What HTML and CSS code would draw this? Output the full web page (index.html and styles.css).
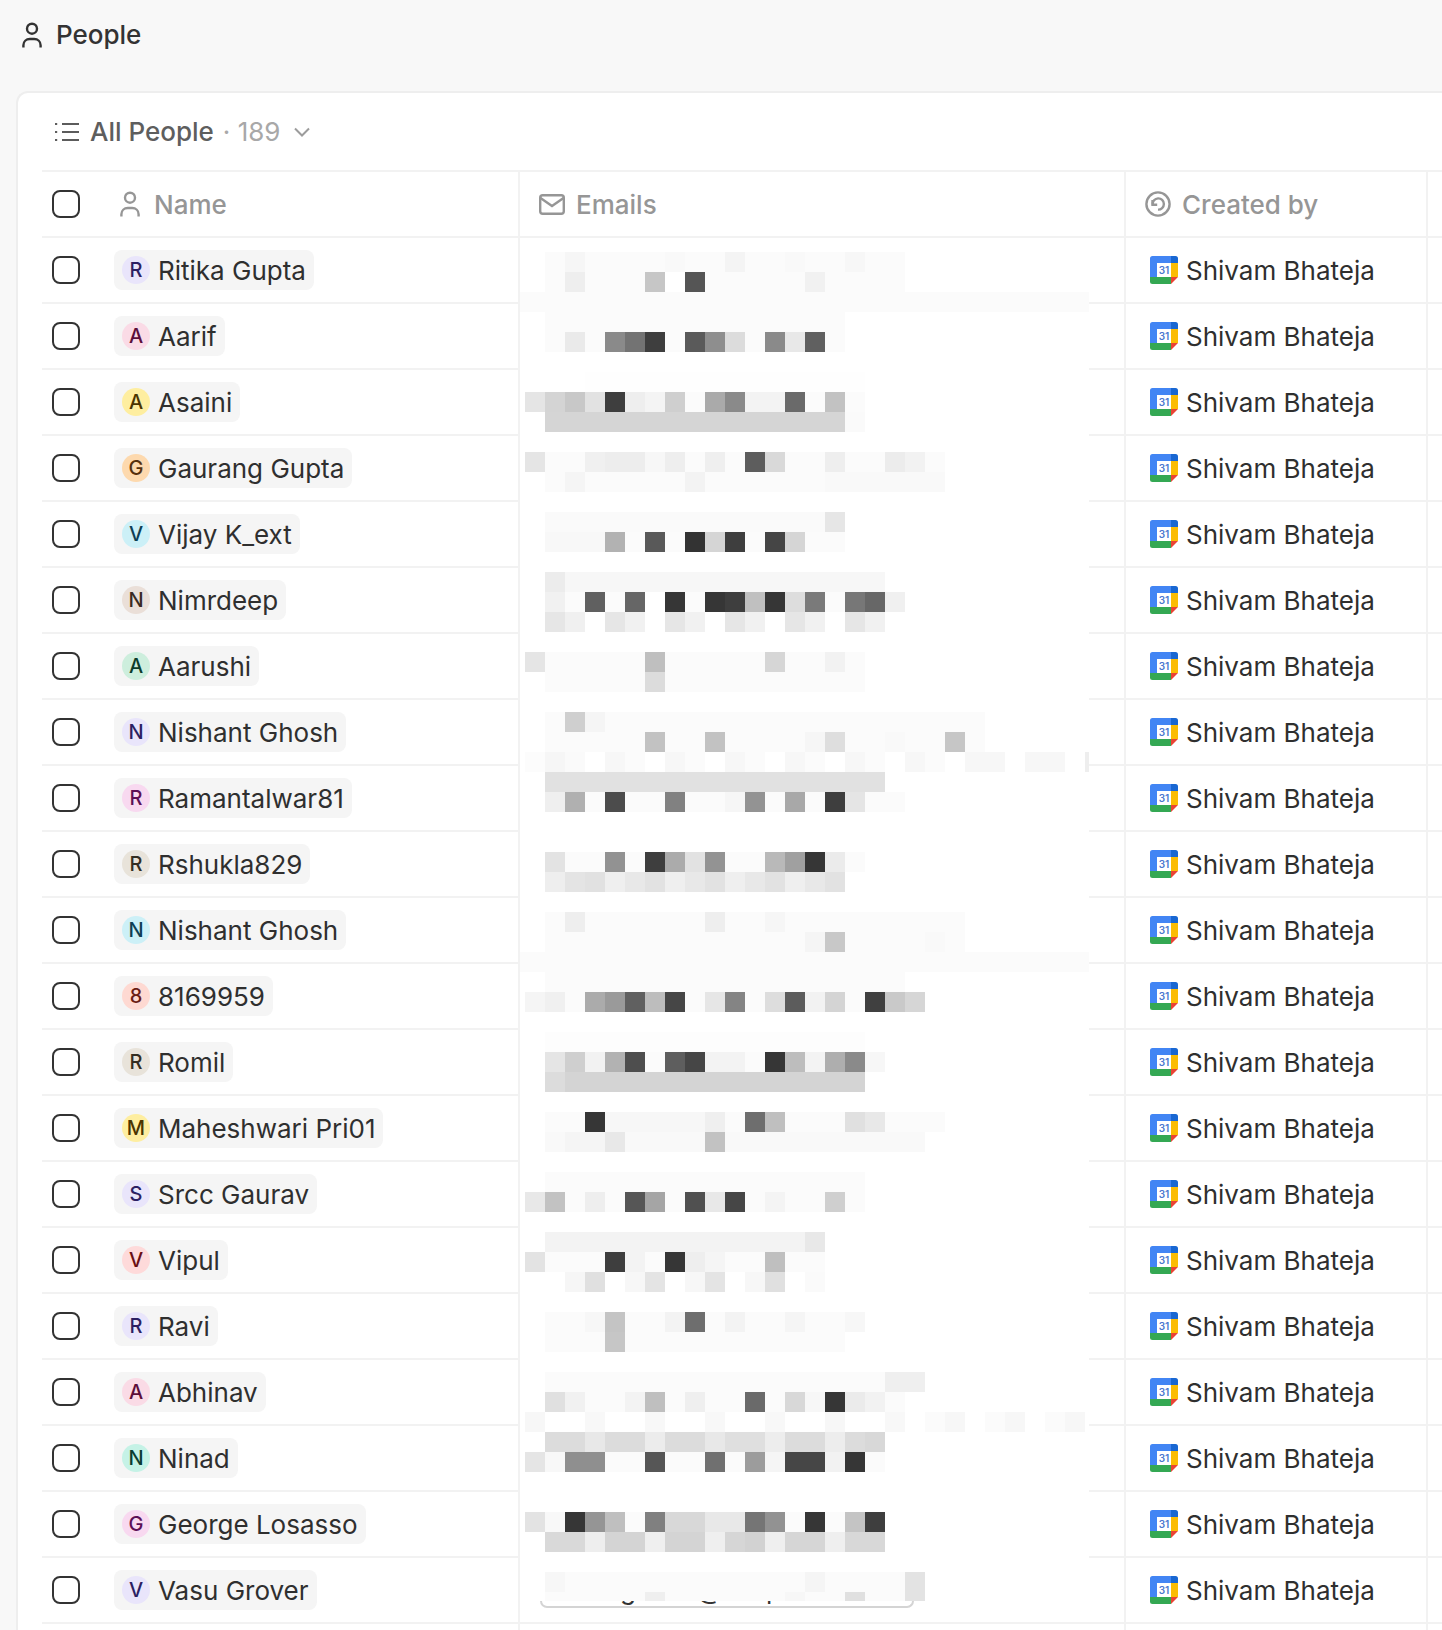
FILE: index.html
```html
<!DOCTYPE html>
<html lang="en">
<head>
<meta charset="utf-8">
<title>People</title>
<link rel="stylesheet" href="styles.css">
</head>
<body>
<svg class="defs" width="0" height="0" aria-hidden="true">
  <symbol id="person" viewBox="0 0 20 26">
    <circle cx="10" cy="6.7" r="5" fill="none" stroke="currentColor" stroke-width="2.4"/>
    <path d="M1.4 25.6v-2.4c0-3.6 2.8-6.2 6.4-6.2h4.4c3.6 0 6.4 2.600 6.4 6.200v2.400" fill="none" stroke="currentColor" stroke-width="2.4"/>
  </symbol>
  <symbol id="cal" viewBox="0 0 28 28">
    <path d="M2.5 0H21v7H7v14H0V2.500A2.500 2.500 0 0 1 2.500 0z" fill="#4285f4"/>
    <path d="M21 0h4.500A2.500 2.500 0 0 1 28 2.500V7h-7z" fill="#1967d2"/>
    <path d="M21 7h7v14h-7z" fill="#fbbc04"/>
    <path d="M7 21h14v7H2.500A2.500 2.500 0 0 1 0 25.500V21z" fill="#34a853"/>
    <path d="M21 21h7l-7 7z" fill="#ea4335"/>
    <path d="M7 7h14v14H7z" fill="#fff"/>
  </symbol>
</svg>

<header class="page-head">
  <svg class="icon-person head-icon"><use href="#person"/></svg>
  <h1 class="page-title">People</h1>
</header>

<main class="card">
  <div class="toolbar">
    <svg class="list-icon" viewBox="0 0 24 20" fill="none" stroke="currentColor" stroke-width="2.200">
      <path d="M7 2h17M7 10h17M7 18h17"/>
      <path d="M0 2h2.200M0 10h2.200M0 18h2.200"/>
    </svg>
    <span class="view-name">All People</span>
    <span class="view-count">· 189</span>
    <svg class="chevron" viewBox="0 0 16 10" fill="none" stroke="currentColor" stroke-width="2"><path d="M1 1.500l7 7 7-7"/></svg>
  </div>

  <div class="table">
    <div class="row head">
      <div class="cell name"><span class="check"></span><span class="head-label name-label"><svg class="icon-person"><use href="#person"/></svg>Name</span></div>
      <div class="cell email-head"><span class="head-label"><svg class="mail-icon" viewBox="0 0 26 21" fill="none" stroke="currentColor" stroke-width="2.400"><rect x="1.200" y="1.200" width="23.600" height="18.600" rx="2.500"/><path d="M1.500 4l11.500 8 11.500-8"/></svg>Emails</span></div>
      <div class="cell creator-head"><span class="head-label"><svg class="hist-icon" viewBox="0 0 26 26" fill="none" stroke="currentColor" stroke-width="2.400"><circle cx="13" cy="13" r="11.600"/><path d="M7.700 13.500a5.600 5.600 0 1 1 5.300 5.100"/><path d="M7.500 9v4.700h4.700"/></svg>Created by</span></div>
      <div class="cell last"></div>
    </div>

    <div class="row"><div class="cell name"><span class="check"></span><span class="chip"><span class="avatar violet">R</span>Ritika Gupta</span></div><div class="cell"></div><div class="cell creator"><span class="cal"><svg class="cal-art"><use href="#cal"/></svg><span class="cal-num">31</span></span>Shivam Bhateja</div><div class="cell last"></div></div>
    <div class="row"><div class="cell name"><span class="check"></span><span class="chip"><span class="avatar pink">A</span>Aarif</span></div><div class="cell"></div><div class="cell creator"><span class="cal"><svg class="cal-art"><use href="#cal"/></svg><span class="cal-num">31</span></span>Shivam Bhateja</div><div class="cell last"></div></div>
    <div class="row"><div class="cell name"><span class="check"></span><span class="chip"><span class="avatar yellow">A</span>Asaini</span></div><div class="cell"></div><div class="cell creator"><span class="cal"><svg class="cal-art"><use href="#cal"/></svg><span class="cal-num">31</span></span>Shivam Bhateja</div><div class="cell last"></div></div>
    <div class="row"><div class="cell name"><span class="check"></span><span class="chip"><span class="avatar orange">G</span>Gaurang Gupta</span></div><div class="cell"></div><div class="cell creator"><span class="cal"><svg class="cal-art"><use href="#cal"/></svg><span class="cal-num">31</span></span>Shivam Bhateja</div><div class="cell last"></div></div>
    <div class="row"><div class="cell name"><span class="check"></span><span class="chip"><span class="avatar cyan">V</span>Vijay K_ext</span></div><div class="cell"></div><div class="cell creator"><span class="cal"><svg class="cal-art"><use href="#cal"/></svg><span class="cal-num">31</span></span>Shivam Bhateja</div><div class="cell last"></div></div>
    <div class="row"><div class="cell name"><span class="check"></span><span class="chip"><span class="avatar brown">N</span>Nimrdeep</span></div><div class="cell"></div><div class="cell creator"><span class="cal"><svg class="cal-art"><use href="#cal"/></svg><span class="cal-num">31</span></span>Shivam Bhateja</div><div class="cell last"></div></div>
    <div class="row"><div class="cell name"><span class="check"></span><span class="chip"><span class="avatar mint">A</span>Aarushi</span></div><div class="cell"></div><div class="cell creator"><span class="cal"><svg class="cal-art"><use href="#cal"/></svg><span class="cal-num">31</span></span>Shivam Bhateja</div><div class="cell last"></div></div>
    <div class="row"><div class="cell name"><span class="check"></span><span class="chip"><span class="avatar violet">N</span>Nishant Ghosh</span></div><div class="cell"></div><div class="cell creator"><span class="cal"><svg class="cal-art"><use href="#cal"/></svg><span class="cal-num">31</span></span>Shivam Bhateja</div><div class="cell last"></div></div>
    <div class="row"><div class="cell name"><span class="check"></span><span class="chip"><span class="avatar magenta">R</span>Ramantalwar81</span></div><div class="cell"></div><div class="cell creator"><span class="cal"><svg class="cal-art"><use href="#cal"/></svg><span class="cal-num">31</span></span>Shivam Bhateja</div><div class="cell last"></div></div>
    <div class="row"><div class="cell name"><span class="check"></span><span class="chip"><span class="avatar sand">R</span>Rshukla829</span></div><div class="cell"></div><div class="cell creator"><span class="cal"><svg class="cal-art"><use href="#cal"/></svg><span class="cal-num">31</span></span>Shivam Bhateja</div><div class="cell last"></div></div>
    <div class="row"><div class="cell name"><span class="check"></span><span class="chip"><span class="avatar cyan">N</span>Nishant Ghosh</span></div><div class="cell"></div><div class="cell creator"><span class="cal"><svg class="cal-art"><use href="#cal"/></svg><span class="cal-num">31</span></span>Shivam Bhateja</div><div class="cell last"></div></div>
    <div class="row"><div class="cell name"><span class="check"></span><span class="chip"><span class="avatar red">8</span>8169959</span></div><div class="cell"></div><div class="cell creator"><span class="cal"><svg class="cal-art"><use href="#cal"/></svg><span class="cal-num">31</span></span>Shivam Bhateja</div><div class="cell last"></div></div>
    <div class="row"><div class="cell name"><span class="check"></span><span class="chip"><span class="avatar sand">R</span>Romil</span></div><div class="cell"></div><div class="cell creator"><span class="cal"><svg class="cal-art"><use href="#cal"/></svg><span class="cal-num">31</span></span>Shivam Bhateja</div><div class="cell last"></div></div>
    <div class="row"><div class="cell name"><span class="check"></span><span class="chip"><span class="avatar yellow">M</span>Maheshwari Pri01</span></div><div class="cell"></div><div class="cell creator"><span class="cal"><svg class="cal-art"><use href="#cal"/></svg><span class="cal-num">31</span></span>Shivam Bhateja</div><div class="cell last"></div></div>
    <div class="row"><div class="cell name"><span class="check"></span><span class="chip"><span class="avatar violet">S</span>Srcc Gaurav</span></div><div class="cell"></div><div class="cell creator"><span class="cal"><svg class="cal-art"><use href="#cal"/></svg><span class="cal-num">31</span></span>Shivam Bhateja</div><div class="cell last"></div></div>
    <div class="row"><div class="cell name"><span class="check"></span><span class="chip"><span class="avatar rose">V</span>Vipul</span></div><div class="cell"></div><div class="cell creator"><span class="cal"><svg class="cal-art"><use href="#cal"/></svg><span class="cal-num">31</span></span>Shivam Bhateja</div><div class="cell last"></div></div>
    <div class="row"><div class="cell name"><span class="check"></span><span class="chip"><span class="avatar violet">R</span>Ravi</span></div><div class="cell"></div><div class="cell creator"><span class="cal"><svg class="cal-art"><use href="#cal"/></svg><span class="cal-num">31</span></span>Shivam Bhateja</div><div class="cell last"></div></div>
    <div class="row"><div class="cell name"><span class="check"></span><span class="chip"><span class="avatar pink">A</span>Abhinav</span></div><div class="cell"></div><div class="cell creator"><span class="cal"><svg class="cal-art"><use href="#cal"/></svg><span class="cal-num">31</span></span>Shivam Bhateja</div><div class="cell last"></div></div>
    <div class="row"><div class="cell name"><span class="check"></span><span class="chip"><span class="avatar aqua">N</span>Ninad</span></div><div class="cell"></div><div class="cell creator"><span class="cal"><svg class="cal-art"><use href="#cal"/></svg><span class="cal-num">31</span></span>Shivam Bhateja</div><div class="cell last"></div></div>
    <div class="row"><div class="cell name"><span class="check"></span><span class="chip"><span class="avatar magenta">G</span>George Losasso</span></div><div class="cell"></div><div class="cell creator"><span class="cal"><svg class="cal-art"><use href="#cal"/></svg><span class="cal-num">31</span></span>Shivam Bhateja</div><div class="cell last"></div></div>
    <div class="row"><div class="cell name"><span class="check"></span><span class="chip"><span class="avatar violet">V</span>Vasu Grover</span></div><div class="cell"></div><div class="cell creator"><span class="cal"><svg class="cal-art"><use href="#cal"/></svg><span class="cal-num">31</span></span>Shivam Bhateja</div><div class="cell last"></div></div>
    <div class="row tail"><div class="cell name"></div><div class="cell"></div><div class="cell"></div><div class="cell last"></div></div>

    <div class="redaction">
      <svg class="mosaic" width="569" height="1384" viewBox="0 0 569 1384" shape-rendering="crispEdges">
        <g transform="translate(5 14) scale(20)">
          <g transform="translate(0 0)"><rect x="1" width="18"/><rect x="2" width="1" fill="#f6f6f6"/><rect x="10" width="1" fill="#f4f4f4"/><rect x="7" width="1" fill="#f9f9f9"/><rect x="13" width="1" fill="#f9f9f9"/><rect x="16" width="1" fill="#f7f7f7"/></g>
          <g transform="translate(0 1)"><rect x="1" width="18"/><rect x="2" width="1" fill="#eee"/><rect x="6" width="1" fill="#c6c6c6"/><rect x="7" width="1" fill="#fff"/><rect x="8" width="1" fill="#555"/><rect x="14" width="1" fill="#f1f1f1"/></g>
          <g transform="translate(0 2)"><rect x="-.25" width="28.500"/></g>
          <g transform="translate(0 3)"><rect x="1" width="15"/></g>
          <g transform="translate(0 4)"><rect x="1" width="15"/><rect x="2" width="1" fill="#eaeaea"/><rect x="4" width="1" fill="#8a8a8a"/><rect x="5" width="1" fill="#737373"/><rect x="6" width="1" fill="#3e3e3e"/><rect x="8" width="1" fill="#5a5a5a"/><rect x="9" width="1" fill="#8e8e8e"/><rect x="10" width="1" fill="#dcdcdc"/><rect x="12" width="1" fill="#8a8a8a"/><rect x="13" width="1" fill="#e8e8e8"/><rect x="14" width="1" fill="#606060"/></g>
          <g transform="translate(0 6)"><rect x="3" width="14" fill="#fefefe"/></g>
          <g transform="translate(0 7)"><rect x="0" width="17"/><rect x="0" width="1" fill="#e5e5e5"/><rect x="1" width="1" fill="#d4d4d4"/><rect x="2" width="1" fill="#c8c8c8"/><rect x="3" width="1" fill="#e2e2e2"/><rect x="4" width="1" fill="#3e3e3e"/><rect x="5" width="1" fill="#eee"/><rect x="6" width="1" fill="#f4f4f4"/><rect x="7" width="1" fill="#cfcfcf"/><rect x="9" width="1" fill="#aaa"/><rect x="10" width="1" fill="#8a8a8a"/><rect x="11" width="2" fill="#f3f3f3"/><rect x="13" width="1" fill="#6a6a6a"/><rect x="15" width="1" fill="#c2c2c2"/></g>
          <g transform="translate(0 8)"><rect x="1" width="15" fill="#d5d5d5"/><rect x="16" width="1" fill="#fafafa"/></g>
          <g transform="translate(0 10)"><rect x="0" width="21"/><rect x="0" width="1" fill="#e5e5e5"/><rect x="3" width="1" fill="#f0f0f0"/><rect x="4" width="2" fill="#ededed"/><rect x="6" width="1" fill="#f7f7f7"/><rect x="7" width="1" fill="#eee"/><rect x="9" width="1" fill="#efefef"/><rect x="11" width="1" fill="#5d5d5d"/><rect x="12" width="1" fill="#d9d9d9"/><rect x="15" width="1" fill="#eee"/><rect x="18" width="1" fill="#ececec"/><rect x="19" width="1" fill="#f2f2f2"/></g>
          <g transform="translate(0 11)"><rect x="1" width="20"/><rect x="2" width="1" fill="#f5f5f5"/><rect x="8" width="1" fill="#f3f3f3"/><rect x="15" width="6" fill="#f9f9f9"/></g>
          <g transform="translate(0 13)"><rect x="1" width="14" fill="#fafafa"/><rect x="15" width="1" fill="#e6e6e6"/></g>
          <g transform="translate(0 14)"><rect x="1" width="15"/><rect x="1" width="3" fill="#f8f8f8"/><rect x="4" width="1" fill="#b2b2b2"/><rect x="6" width="1" fill="#595959"/><rect x="8" width="1" fill="#333"/><rect x="9" width="1" fill="#d5d5d5"/><rect x="10" width="1" fill="#3e3e3e"/><rect x="12" width="1" fill="#454545"/><rect x="13" width="1" fill="#d5d5d5"/></g>
          <g transform="translate(0 16)"><rect x="1" width="1" fill="#ececec"/><rect x="2" width="16" fill="#f7f7f7"/></g>
          <g transform="translate(0 17)"><rect x="1" width="18"/><rect x="1" width="1" fill="#f1f1f1"/><rect x="3" width="1" fill="#606060"/><rect x="5" width="1" fill="#666"/><rect x="6" width="1" fill="#fff"/><rect x="7" width="1" fill="#363636"/><rect x="9" width="1" fill="#363636"/><rect x="10" width="1" fill="#3e3e3e"/><rect x="11" width="1" fill="#c0c0c0"/><rect x="12" width="1" fill="#363636"/><rect x="13" width="1" fill="#ddd"/><rect x="14" width="1" fill="#7a7a7a"/><rect x="16" width="1" fill="#777"/><rect x="17" width="1" fill="#676767"/><rect x="18" width="1" fill="#f0f0f0"/></g>
          <g transform="translate(0 18)"><rect x="1" width="1" fill="#e6e6e6"/><rect x="2" width="1" fill="#f0f0f0"/><rect x="4" width="1" fill="#e6e6e6"/><rect x="5" width="1" fill="#f1f1f1"/><rect x="7" width="1" fill="#e6e6e6"/><rect x="8" width="1" fill="#f1f1f1"/><rect x="10" width="1" fill="#e6e6e6"/><rect x="11" width="1" fill="#f1f1f1"/><rect x="13" width="1" fill="#e6e6e6"/><rect x="14" width="1" fill="#f1f1f1"/><rect x="16" width="1" fill="#e6e6e6"/><rect x="17" width="1" fill="#f1f1f1"/></g>
          <g transform="translate(0 20)"><rect x="0" width="17"/><rect x="0" width="1" fill="#e5e5e5"/><rect x="6" width="1" fill="#bfbfbf"/><rect x="12" width="1" fill="#d6d6d6"/><rect x="15" width="1" fill="#f2f2f2"/></g>
          <g transform="translate(0 21)"><rect x="1" width="16"/><rect x="6" width="1" fill="#dcdcdc"/></g>
          <g transform="translate(0 23)"><rect x="1" width="22"/><rect x="2" width="1" fill="#cfcfcf"/><rect x="3" width="1" fill="#f5f5f5"/></g>
          <g transform="translate(0 24)"><rect x="1" width="22"/><rect x="6" width="1" fill="#c2c2c2"/><rect x="9" width="1" fill="#c2c2c2"/><rect x="14" width="1" fill="#f6f6f6"/><rect x="15" width="1" fill="#dedede"/><rect x="18" width="1" fill="#f9f9f9"/><rect x="21" width="1" fill="#c6c6c6"/></g>
          <g transform="translate(0 25)"><rect x="0" width="1" fill="#fcfcfc"/><rect x="1" width="1" fill="#f6f6f6"/><rect x="2" width="1" fill="#fafafa"/><rect x="4" width="1" fill="#f7f7f7"/><rect x="5" width="1"/><rect x="7" width="1" fill="#f7f7f7"/><rect x="8" width="1"/><rect x="10" width="1" fill="#f7f7f7"/><rect x="11" width="1"/><rect x="13" width="1" fill="#f7f7f7"/><rect x="14" width="1"/><rect x="16" width="1" fill="#f7f7f7"/><rect x="17" width="1"/><rect x="19" width="1" fill="#f7f7f7"/><rect x="20" width="1"/><rect x="22" width="2" fill="#f7f7f7"/><rect x="25" width="2" fill="#f7f7f7"/><rect x="28" width=".2" fill="#eee"/></g>
          <g transform="translate(0 26)"><rect x="1" width="17" fill="#e1e1e1"/></g>
          <g transform="translate(0 27)"><rect x="1" width="18"/><rect x="1" width="1" fill="#efefef"/><rect x="2" width="1" fill="#b0b0b0"/><rect x="4" width="1" fill="#4c4c4c"/><rect x="7" width="1" fill="#818181"/><rect x="10" width="1" fill="#f6f6f6"/><rect x="11" width="1" fill="#939393"/><rect x="13" width="1" fill="#a8a8a8"/><rect x="15" width="1" fill="#3e3e3e"/><rect x="16" width="1" fill="#e5e5e5"/></g>
          <g transform="translate(0 30)"><rect x="1" width="16"/><rect x="1" width="1" fill="#e3e3e3"/><rect x="4" width="1" fill="#929292"/><rect x="6" width="1" fill="#3e3e3e"/><rect x="7" width="1" fill="#ababab"/><rect x="8" width="1" fill="#e2e2e2"/><rect x="9" width="1" fill="#939393"/><rect x="12" width="1" fill="#b9b9b9"/><rect x="13" width="1" fill="#a0a0a0"/><rect x="14" width="1" fill="#363636"/><rect x="15" width="1" fill="#ebebeb"/></g>
          <g transform="translate(0 31)"><rect x="1" width="1" fill="#eee"/><rect x="2" width="1" fill="#e4e4e4"/><rect x="3" width="1" fill="#e1e1e1"/><rect x="4" width="1" fill="#efefef"/><rect x="5" width="1" fill="#e8e8e8"/><rect x="6" width="1" fill="#e2e2e2"/><rect x="7" width="1" fill="#efefef"/><rect x="8" width="1" fill="#e8e8e8"/><rect x="9" width="1" fill="#e2e2e2"/><rect x="10" width="1" fill="#efefef"/><rect x="11" width="1" fill="#e8e8e8"/><rect x="12" width="1" fill="#e2e2e2"/><rect x="13" width="1" fill="#efefef"/><rect x="14" width="1" fill="#e8e8e8"/><rect x="15" width="1" fill="#e2e2e2"/></g>
          <g transform="translate(0 33)"><rect x="1" width="21"/><rect x="2" width="1" fill="#eee"/><rect x="9" width="1" fill="#eee"/><rect x="12" width="1" fill="#f6f6f6"/></g>
          <g transform="translate(0 34)"><rect x="1" width="21"/><rect x="14" width="1" fill="#f5f5f5"/><rect x="15" width="1" fill="#c8c8c8"/><rect x="20" width="1" fill="#f9f9f9"/></g>
          <g transform="translate(0 35)"><rect x="-.25" width="28.500"/></g>
          <g transform="translate(0 36)"><rect x="1" width="18"/></g>
          <g transform="translate(0 37)"><rect x="0" width="20"/><rect x="0" width="1" fill="#f5f5f5"/><rect x="1" width="1" fill="#f0f0f0"/><rect x="3" width="1" fill="#ababab"/><rect x="4" width="1" fill="#9a9a9a"/><rect x="5" width="1" fill="#606060"/><rect x="6" width="1" fill="#bdbdbd"/><rect x="7" width="1" fill="#464646"/><rect x="9" width="1" fill="#e6e6e6"/><rect x="10" width="1" fill="#848484"/><rect x="12" width="1" fill="#ddd"/><rect x="13" width="1" fill="#5c5c5c"/><rect x="14" width="1" fill="#f2f2f2"/><rect x="15" width="1" fill="#d4d4d4"/><rect x="17" width="1" fill="#404040"/><rect x="18" width="1" fill="#c9c9c9"/><rect x="19" width="1" fill="#d6d6d6"/></g>
          <g transform="translate(0 39)"><rect x="1" width="16" fill="#fdfdfd"/></g>
          <g transform="translate(0 40)"><rect x="1" width="17"/><rect x="1" width="1" fill="#e5e5e5"/><rect x="2" width="1" fill="#cfcfcf"/><rect x="3" width="1" fill="#f2f2f2"/><rect x="4" width="1" fill="#b2b2b2"/><rect x="5" width="1" fill="#4e4e4e"/><rect x="7" width="1" fill="#5e5e5e"/><rect x="8" width="1" fill="#464646"/><rect x="9" width="2" fill="#f3f3f3"/><rect x="12" width="1" fill="#363636"/><rect x="13" width="1" fill="#bdbdbd"/><rect x="14" width="1" fill="#f3f3f3"/><rect x="15" width="1" fill="#aeaeae"/><rect x="16" width="1" fill="#8a8a8a"/><rect x="17" width="1" fill="#f7f7f7"/></g>
          <g transform="translate(0 41)"><rect x="1" width="1" fill="#dcdcdc"/><rect x="2" width="15" fill="#d4d4d4"/></g>
          <g transform="translate(0 43)"><rect x="1" width="20"/><rect x="3" width="1" fill="#363636"/><rect x="4" width="5" fill="#f7f7f7"/><rect x="9" width="1" fill="#efefef"/><rect x="11" width="1" fill="#6e6e6e"/><rect x="12" width="1" fill="#bfbfbf"/><rect x="16" width="1" fill="#e0e0e0"/><rect x="17" width="1" fill="#e8e8e8"/></g>
          <g transform="translate(0 44)"><rect x="1" width="19" fill="#f9f9f9"/><rect x="2" width="2" fill="#f5f5f5"/><rect x="4" width="1" fill="#e8e8e8"/><rect x="9" width="1" fill="#c2c2c2"/></g>
          <g transform="translate(0 46)"><rect x="1" width="16"/></g>
          <g transform="translate(0 47)"><rect x="0" width="17"/><rect x="0" width="1" fill="#e8e8e8"/><rect x="1" width="1" fill="#c2c2c2"/><rect x="3" width="1" fill="#eee"/><rect x="5" width="1" fill="#565656"/><rect x="6" width="1" fill="#a5a5a5"/><rect x="8" width="1" fill="#505050"/><rect x="9" width="1" fill="#e8e8e8"/><rect x="10" width="1" fill="#464646"/><rect x="12" width="1" fill="#f4f4f4"/><rect x="15" width="1" fill="#cfcfcf"/></g>
          <g transform="translate(0 49)"><rect x="1" width="13" fill="#f3f3f3"/><rect x="14" width="1" fill="#e8e8e8"/></g>
          <g transform="translate(0 50)"><rect x="0" width="15"/><rect x="0" width="1" fill="#e3e3e3"/><rect x="4" width="1" fill="#3e3e3e"/><rect x="5" width="1" fill="#f3f3f3"/><rect x="7" width="1" fill="#363636"/><rect x="8" width="1" fill="#eee"/><rect x="9" width="1" fill="#f5f5f5"/><rect x="12" width="1" fill="#bfbfbf"/></g>
          <g transform="translate(0 51)"><rect x="2" width="1" fill="#f6f6f6"/><rect x="3" width="1" fill="#e0e0e0"/><rect x="5" width="1" fill="#f7f7f7"/><rect x="6" width="1" fill="#e4e4e4"/><rect x="8" width="1" fill="#f7f7f7"/><rect x="9" width="1" fill="#e4e4e4"/><rect x="11" width="1" fill="#f7f7f7"/><rect x="12" width="1" fill="#e0e0e0"/><rect x="14" width="1" fill="#fafafa"/></g>
          <g transform="translate(0 53)"><rect x="1" width="16"/><rect x="3" width="1" fill="#f7f7f7"/><rect x="4" width="1" fill="#c4c4c4"/><rect x="7" width="1" fill="#f3f3f3"/><rect x="8" width="1" fill="#6e6e6e"/><rect x="10" width="1" fill="#f3f3f3"/><rect x="13" width="1" fill="#f5f5f5"/><rect x="16" width="1" fill="#f7f7f7"/></g>
          <g transform="translate(0 54)"><rect x="1" width="15"/><rect x="4" width="1" fill="#c6c6c6"/></g>
          <g transform="translate(0 56)"><rect x="1" width="17"/><rect x="18" width="2" fill="#efefef"/></g>
          <g transform="translate(0 57)"><rect x="1" width="18"/><rect x="1" width="1" fill="#e0e0e0"/><rect x="2" width="1" fill="#f1f1f1"/><rect x="5" width="1" fill="#f3f3f3"/><rect x="6" width="1" fill="#bfbfbf"/><rect x="8" width="1" fill="#efefef"/><rect x="11" width="1" fill="#6a6a6a"/><rect x="13" width="1" fill="#d8d8d8"/><rect x="14" width="1" fill="#f7f7f7"/><rect x="15" width="1" fill="#363636"/><rect x="16" width="1" fill="#ebebeb"/><rect x="17" width="1" fill="#f2f2f2"/></g>
          <g transform="translate(0 58)"><rect x="0" width="1" fill="#f7f7f7"/><rect x="3" width="1" fill="#f8f8f8"/><rect x="6" width="1" fill="#f8f8f8"/><rect x="9" width="1" fill="#f8f8f8"/><rect x="12" width="1" fill="#f8f8f8"/><rect x="15" width="1" fill="#f7f7f7"/><rect x="18" width="1" fill="#f8f8f8"/><rect x="21" width="1" fill="#f7f7f7"/><rect x="24" width="1" fill="#f7f7f7"/><rect x="27" width="1" fill="#f7f7f7"/><rect x="20" width="1"/><rect x="23" width="1"/><rect x="26" width="1"/></g>
          <g transform="translate(0 59)"><rect x="1" width="2" fill="#dcdcdc"/><rect x="3" width="1" fill="#e8e8e8"/><rect x="4" width="2" fill="#dcdcdc"/><rect x="6" width="1" fill="#ececec"/><rect x="7" width="2" fill="#dcdcdc"/><rect x="9" width="1" fill="#e8e8e8"/><rect x="10" width="2" fill="#dfdfdf"/><rect x="12" width="1" fill="#ededed"/><rect x="13" width="2" fill="#dcdcdc"/><rect x="15" width="1" fill="#ededed"/><rect x="16" width="1" fill="#dcdcdc"/><rect x="17" width="1" fill="#d8d8d8"/></g>
          <g transform="translate(0 60)"><rect x="0" width="18"/><rect x="0" width="1" fill="#e5e5e5"/><rect x="1" width="1" fill="#f8f8f8"/><rect x="2" width="2" fill="#8f8f8f"/><rect x="6" width="1" fill="#565656"/><rect x="9" width="1" fill="#707070"/><rect x="11" width="1" fill="#9c9c9c"/><rect x="12" width="1" fill="#f5f5f5"/><rect x="13" width="2" fill="#464646"/><rect x="15" width="1" fill="#f2f2f2"/><rect x="16" width="1" fill="#363636"/></g>
          <g transform="translate(0 63)"><rect x="0" width="18"/><rect x="0" width="1" fill="#e3e3e3"/><rect x="1" width="1" fill="#f8f8f8"/><rect x="2" width="1" fill="#363636"/><rect x="3" width="1" fill="#959595"/><rect x="4" width="1" fill="#bfbfbf"/><rect x="6" width="1" fill="#808080"/><rect x="7" width="2" fill="#d8d8d8"/><rect x="9" width="2" fill="#e8e8e8"/><rect x="11" width="1" fill="#757575"/><rect x="12" width="1" fill="#929292"/><rect x="14" width="1" fill="#363636"/><rect x="16" width="1" fill="#c4c4c4"/><rect x="17" width="1" fill="#3e3e3e"/></g>
          <g transform="translate(0 64)"><rect x="1" width="2" fill="#d9d9d9"/><rect x="3" width="1" fill="#eee"/><rect x="4" width="2" fill="#d4d4d4"/><rect x="6" width="1" fill="#efefef"/><rect x="7" width="2" fill="#d4d4d4"/><rect x="9" width="1" fill="#efefef"/><rect x="10" width="1" fill="#d6d6d6"/><rect x="11" width="1" fill="#d2d2d2"/><rect x="12" width="1" fill="#efefef"/><rect x="13" width="2" fill="#d6d6d6"/><rect x="15" width="1" fill="#efefef"/><rect x="16" width="2" fill="#d8d8d8"/></g>
          <g transform="translate(0 66)"><rect x="1" width="19"/><rect x="1" width="1" fill="#f7f7f7"/><rect x="14" width="1" fill="#f5f5f5"/><rect x="19" width="1" fill="#e3e3e3"/></g>
          <g transform="translate(0 67)" class="cut"><rect x="1" width="19"/><rect x="6" width="1" fill="#efefef"/><rect x="13" width="1" fill="#f7f7f7"/><rect x="16" width="1" fill="#e0e0e0"/><rect x="19" width="1" fill="#e3e3e3"/></g>
        </g>
      </svg>
      <div class="peek">
        <span class="peek-g">g</span><span class="peek-at">@</span><span class="peek-p">p</span>
      </div>
    </div>
  </div>
</main>
</body>
</html>
```

FILE: styles.css
```css
* { box-sizing: border-box; }

html, body {
  margin: 0;
  height: 1630px;
  overflow: hidden;
}

body {
  background: #f8f8f8;
  color: #2f2f2f;
  font-family: Inter, "Liberation Sans", sans-serif;
  font-size: 26px;
}

.defs { position: absolute; }

.page-head {
  display: flex;
  align-items: center;
  height: 91px;
  padding: 0 0 22px 22px;
}

.icon-person {
  width: 20px;
  height: 26px;
}

.head-icon { color: #333; }

.page-title {
  margin: 0 0 0 14px;
  font-size: 26px;
  font-weight: 500;
  color: #333;
}

.card {
  margin-left: 16px;
  height: 1539px;
  background: #fff;
  border: 2px solid #eeeeee;
  border-width: 2px 0 0 2px;
  border-top-left-radius: 12px;
}

.toolbar {
  display: flex;
  align-items: center;
  height: 77px;
  padding-left: 37px;
}

.list-icon {
  width: 24px;
  height: 20px;
  color: #5c5c5c;
}

.view-name {
  margin-left: 11px;
  font-weight: 500;
  color: #5e5e5e;
}

.view-count {
  margin-left: 9px;
  color: #a8a8a8;
}

.chevron {
  width: 16px;
  height: 10px;
  margin-left: 14px;
  color: #9c9c9c;
}

.table {
  position: relative;
  margin-left: 24px;
  border-top: 2px solid #f2f2f2;
}

.row {
  display: grid;
  grid-template-columns: 478px 606px 302px 1fr;
  height: 66px;
  border-bottom: 2px solid #f2f2f2;
}

.row.tail { border-bottom: 0; }

.cell {
  display: flex;
  align-items: center;
  border-right: 2px solid #f2f2f2;
}

.cell.last { border-right: 0; }

.cell.name { padding-left: 10px; }

.check {
  flex: none;
  width: 28px;
  height: 28px;
  margin-right: 34px;
  border: 2px solid #333;
  border-radius: 8px;
}

.chip {
  display: flex;
  align-items: center;
  height: 40px;
  padding: 0 8px;
  gap: 8px;
  background: #f5f5f5;
  border-radius: 8px;
  white-space: nowrap;
}

.avatar {
  display: flex;
  flex: none;
  align-items: center;
  justify-content: center;
  width: 28px;
  height: 28px;
  border-radius: 50%;
  font-size: 20px;
  font-weight: 500;
}

.violet { background: #e9e5fb; color: #2c1f63; }
.pink { background: #fadbe6; color: #5c0f3a; }
.yellow { background: #feeea0; color: #4b3500; }
.orange { background: #fdd9ae; color: #55300c; }
.cyan { background: #ccf0f7; color: #0e3f55; }
.brown { background: #eadfd8; color: #3a2a22; }
.mint { background: #cdeedd; color: #0c3d2b; }
.magenta { background: #f8d9f0; color: #5c0f55; }
.sand { background: #e8e3da; color: #332e22; }
.red { background: #fed9d2; color: #6a1c14; }
.rose { background: #fedada; color: #6a0f14; }
.aqua { background: #c5f2e6; color: #0b3d32; }

.head-label {
  display: flex;
  align-items: center;
  gap: 14px;
  font-weight: 500;
  color: #969696;
}

.head-label svg { flex: none; color: #969696; }

.name-label { margin-left: 6px; }

.email-head { padding-left: 19px; }

.mail-icon {
  width: 26px;
  height: 21px;
  margin-right: -3px;
}

.creator-head { padding-left: 19px; }

.hist-icon {
  width: 26px;
  height: 26px;
  margin-right: -3px;
}

.creator {
  padding-left: 24px;
  gap: 8px;
  white-space: nowrap;
}

.cal {
  position: relative;
  display: flex;
  flex: none;
  align-items: center;
  justify-content: center;
  width: 28px;
  height: 28px;
}

.cal-art {
  position: absolute;
  inset: 0;
  width: 28px;
  height: 28px;
}

.cal-num {
  position: relative;
  font-size: 10px;
  font-weight: 600;
  line-height: 1;
  color: #4a78d0;
}

.redaction {
  position: absolute;
  top: 66px;
  left: 478px;
  width: 569px;
  height: 1384px;
  background: #fff;
}

.mosaic {
  display: block;
  fill: #fbfbfb;
}

.mosaic rect { height: 1px; }
.mosaic .cut rect { height: .45px; }

.peek {
  position: absolute;
  left: 20px;
  bottom: 14px;
  width: 374px;
  height: 7px;
  overflow: hidden;
  border: 2px solid #d4d4d4;
  border-top: 0;
  border-radius: 0 0 12px 12px;
  line-height: 26px;
  color: #333;
}

.peek span {
  position: absolute;
  top: -24px;
}

.peek-g { left: 78px; }
.peek-at { left: 155px; }
.peek-p { left: 224px; }
```
